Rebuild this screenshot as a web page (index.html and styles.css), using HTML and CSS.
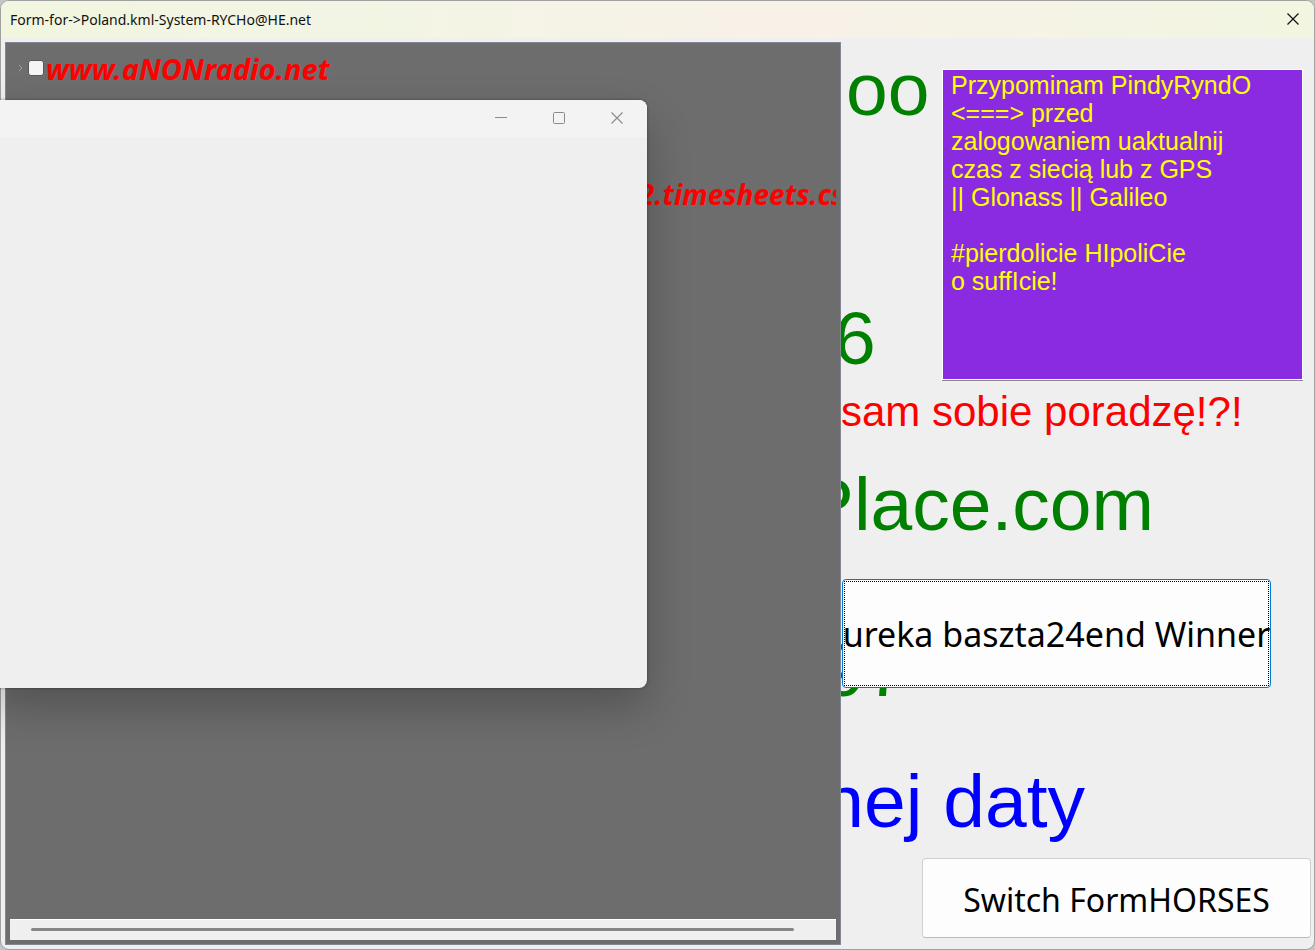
FILE: index.html
```html
<!DOCTYPE html>
<html lang="pl">
<head>
<meta charset="utf-8">
<title>Form-for-&gt;Poland.kml-System-RYCHo@HE.net</title>
<link rel="stylesheet" href="styles.css">
</head>
<body>
<div class="window">
  <header class="titlebar">
    <h1 class="title">Form-for-&gt;Poland.kml-System-RYCHo@HE.net</h1>
    <button class="close" type="button" aria-label="Close">
      <svg width="12" height="12" viewBox="0 0 12 12"><path d="M0.5 0.5 11.5 11.5M11.5 0.5 0.5 11.5" stroke="#111" stroke-width="1.2" fill="none"/></svg>
    </button>
  </header>
  <main class="content">
    <section class="tree">
      <div class="nodes">
        <div class="node">
          <svg class="arrow" width="5" height="8" viewBox="0 0 5 8"><path d="M1 1 4 4 1 7" stroke="#a0a0a0" fill="none"/></svg>
          <input class="tick" type="checkbox" id="radio">
          <label for="radio">www.aNONradio.net</label>
        </div>
        <div class="node sheet">2.timesheets.cs</div>
      </div>
      <div class="scrollbar"><div class="thumb"></div></div>
    </section>
    <section class="form">
      <div class="top">
        <div class="numbers">
          <p class="big">oo</p>
          <p class="big six">6</p>
        </div>
        <textarea class="note" aria-label="Note" spellcheck="false">Przypominam PindyRyndO
&lt;===&gt; przed
zalogowaniem uaktualnij
czas z siecią lub z GPS
|| Glonass || Galileo

#pierdolicie HIpoliCie
o suffIcie!</textarea>
      </div>
      <p class="advice">sam sobie poradzę!?!</p>
      <p class="big place">Place.com</p>
      <div class="winner">
        <p class="big code">97</p>
        <button class="eureka" type="button"><span class="focus"></span><span class="caption">ureka baszta24end Winner</span></button>
      </div>
      <p class="big date">nej daty</p>
      <button class="switch" type="button">Switch FormHORSES</button>
    </section>
  </main>
</div>
<div class="popup">
  <div class="popup-bar">
    <button type="button" aria-label="Minimize"><svg width="12" height="12" viewBox="0 0 12 12"><path d="M0 5.5H12" stroke="#8a8a8a"/></svg></button>
    <button type="button" aria-label="Maximize"><svg width="12" height="12" viewBox="0 0 12 12"><rect x=".5" y=".5" width="11" height="11" rx="1" stroke="#8a8a8a" fill="none"/></svg></button>
    <button type="button" aria-label="Close"><svg width="12" height="12" viewBox="0 0 12 12"><path d="M0.5 0.5 11.5 11.5M11.5 0.5 0.5 11.5" stroke="#8a8a8a" stroke-width="1.1" fill="none"/></svg></button>
  </div>
</div>
</body>
</html>
```
FILE: styles.css
```css
* { box-sizing: border-box; }
body {
  position: relative;
  margin: 0;
  height: 100vh;
  overflow: hidden;
  background: #c4c4c4;
  font-family: "Noto Sans", sans-serif;
}
p, h1 { margin: 0; font-weight: 400; }
button { font-family: inherit; padding: 0; color: #000; }
svg { display: block; }

.window {
  display: flex;
  flex-direction: column;
  height: 100%;
  background: #efefef;
  border: 1px solid #a0a0a0;
  border-radius: 9px;
  overflow: hidden;
}
.titlebar {
  display: flex;
  align-items: center;
  justify-content: space-between;
  height: 37px;
  padding: 0 15px 0 9px;
  background: linear-gradient(90deg, #f1f6df 0%, #f3f5e4 30%, #f8f1e8 60%, #f5f3e6 75%, #f2f6e0 100%);
}
.title { font-size: 14px; line-height: 20px; color: #111; }
.close { padding-bottom: 2px; border: 0; background: none; }

.content { flex: 1; display: flex; min-height: 0; }
.tree {
  flex: 0 0 64%;
  max-width: 836px;
  display: flex;
  flex-direction: column;
  margin: 4px 0 4px 4px;
  padding: 4px;
  background: #6d6d6d;
  border: 1px solid #838793;
}
.nodes { flex: 1; overflow: hidden; }
.node {
  display: flex;
  align-items: center;
  height: 42px;
  padding-left: 8px;
  font-size: 29px;
  font-weight: 700;
  font-style: italic;
  color: #f00;
  white-space: nowrap;
}
.arrow { margin-right: 5px; }
.tick {
  appearance: none;
  width: 16px;
  height: 16px;
  margin: 0 2px 0 0;
  background: #f4f4f4;
  border: 1px solid #585858;
  border-radius: 3px;
}
.sheet { margin-top: 84px; padding-left: 629px; font-size: 28px; }
.scrollbar {
  display: flex;
  align-items: center;
  height: 21px;
  padding: 0 42px 1px 21px;
  background: #efefef;
  border-top: 1px solid #fff;
}
.thumb { flex: 1; height: 3px; border-radius: 2px; background: #868686; }

.form {
  flex: 1;
  min-width: 0;
  display: flex;
  flex-direction: column;
  font-family: "Liberation Sans", Arial, sans-serif;
  overflow: hidden;
}
.big { font-size: 75px; line-height: 84px; color: #008000; white-space: nowrap; }
.top { display: flex; justify-content: space-between; padding: 31px 11px 0 0; }
.numbers { width: 90px; margin-top: -22px; padding-left: 5px; }
.six { margin: 165px 0 0 -12px; }
.note {
  flex: 0 0 361px;
  height: 311px;
  padding: 1px 40px 1px 8px;
  font: 25px/28px "Liberation Sans", Arial, sans-serif;
  color: #ff0;
  background: #8a2be2;
  border: 1px solid #fff;
  border-radius: 0;
  box-shadow: 0 1px #868686;
  resize: none;
  outline: 0;
  overflow: hidden;
}
.advice { font-size: 42px; line-height: 48px; padding-top: 8px; color: #f00; }
.place { margin-top: 26px; }
.place, .date { display: flex; justify-content: flex-end; }
.place { padding-right: 160px; }
.winner { display: grid; grid-template-columns: minmax(0, 1fr); margin-top: 33px; }
.winner > * { grid-area: 1 / 1; }
.code { align-self: end; margin: 0 0 -24px -17px; }
.eureka {
  display: grid;
  grid-template-columns: minmax(0, 1fr);
  align-items: center;
  z-index: 1;
  height: 109px;
  margin: 0 43px 0 1px;
  padding: 1px;
  background: #fdfdfd;
  border: 1px solid #0078d4;
  border-radius: 4px;
  font-family: "Noto Sans", sans-serif;
  font-size: 34px;
  white-space: nowrap;
}
.eureka > * { grid-area: 1 / 1; }
.focus { align-self: stretch; border: 1px dotted #000; }
.caption { justify-self: center; }
.date { margin-top: 71px; padding-right: 229px; color: #00f; }
.switch {
  align-self: flex-end;
  width: 389px;
  height: 80px;
  margin: 15px 3px 0 0;
  padding-top: 2px;
  background: #fdfdfd;
  border: 1px solid #d0d0d0;
  border-bottom-color: #bbb;
  border-radius: 4px;
  font-family: "Noto Sans", sans-serif;
  font-size: 32px;
}

.popup {
  position: absolute;
  top: 100px;
  left: -10px;
  width: 657px;
  height: 588px;
  background: #efefef;
  border-radius: 0 8px 8px 0;
  box-shadow: 0 20px 44px rgba(0, 0, 0, .24), 0 0 3px rgba(0, 0, 0, .4);
  overflow: hidden;
}
.popup-bar {
  display: flex;
  justify-content: flex-end;
  height: 37px;
  padding-right: 1px;
  background: #f3f3f3;
}
.popup-bar button {
  display: grid;
  place-items: center;
  width: 58px;
  padding-bottom: 1px;
  border: 0;
  background: none;
}
```
